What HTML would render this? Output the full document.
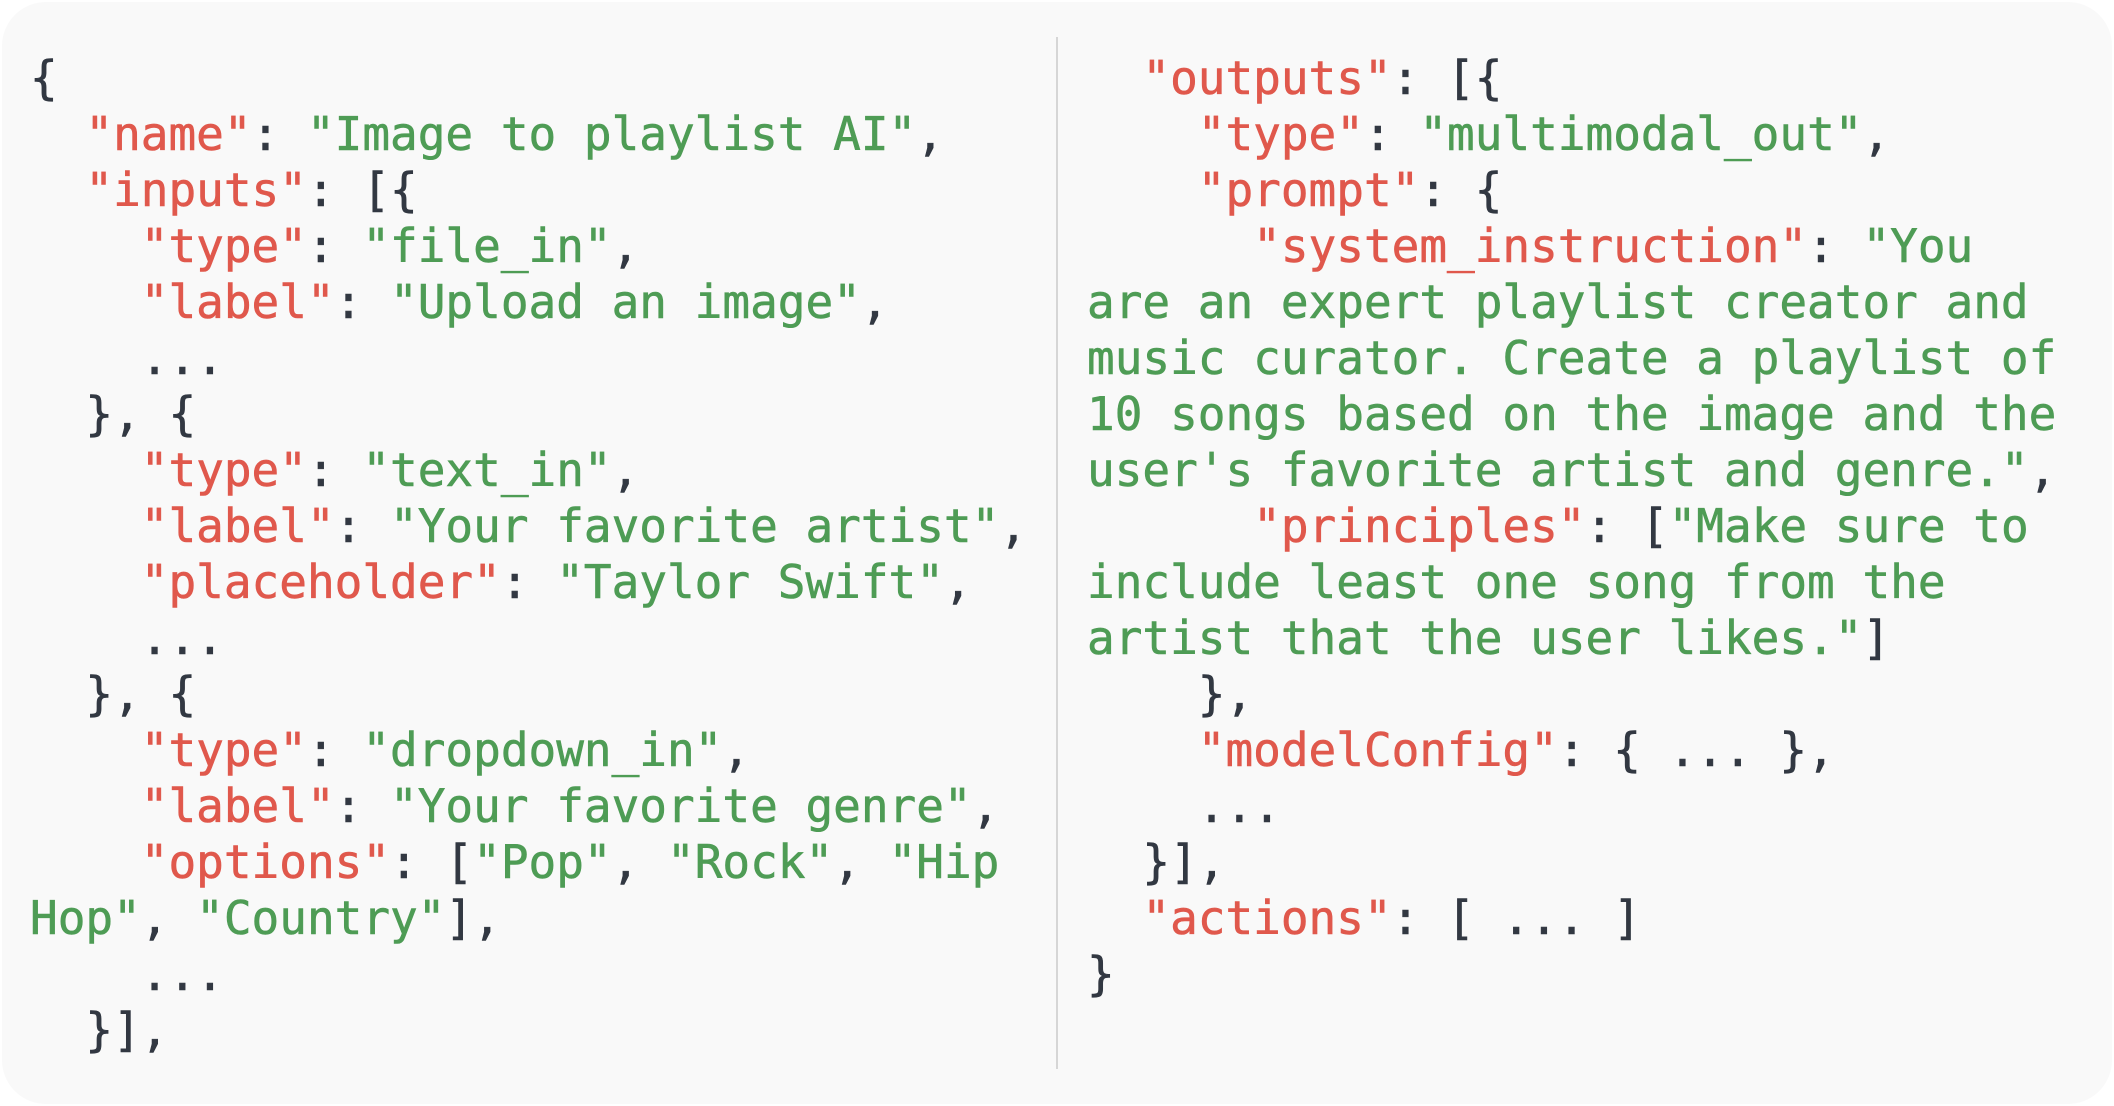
<!DOCTYPE html>
<html><head><style>
html,body{margin:0;padding:0;background:#fff;width:2114px;height:1106px;overflow:hidden}
.card{position:absolute;left:2px;top:2px;width:2110px;height:1102px;background:#f9f9f9;border-radius:44px}
.div{position:absolute;left:1056px;top:37px;width:2px;height:1032px;background:#d6d6d6}
pre{position:absolute;margin:0;font-family:"DejaVu Sans Mono","Liberation Mono",monospace;font-size:46px;line-height:56px;color:#323842;white-space:pre;-webkit-text-stroke:0.6px currentColor}
.k{color:#e0584c}.s{color:#4e9c55}
</style></head><body>
<div class="card"></div><div class="div"></div>
<pre style="left:30px;top:50px">{
  <span class="k">"name"</span>: <span class="s">"Image to playlist AI"</span>,
  <span class="k">"inputs"</span>: [{
    <span class="k">"type"</span>: <span class="s">"file_in"</span>,
    <span class="k">"label"</span>: <span class="s">"Upload an image"</span>,
    ...
  }, {
    <span class="k">"type"</span>: <span class="s">"text_in"</span>,
    <span class="k">"label"</span>: <span class="s">"Your favorite artist"</span>,
    <span class="k">"placeholder"</span>: <span class="s">"Taylor Swift"</span>,
    ...
  }, {
    <span class="k">"type"</span>: <span class="s">"dropdown_in"</span>,
    <span class="k">"label"</span>: <span class="s">"Your favorite genre"</span>,
    <span class="k">"options"</span>: [<span class="s">"Pop"</span>, <span class="s">"Rock"</span>, <span class="s">"Hip</span>
<span class="s">Hop"</span>, <span class="s">"Country"</span>],
    ...
  }],</pre>
<pre style="left:1087px;top:50px">  <span class="k">"outputs"</span>: [{
    <span class="k">"type"</span>: <span class="s">"multimodal_out"</span>,
    <span class="k">"prompt"</span>: {
      <span class="k">"system_instruction"</span>: <span class="s">"You</span>
<span class="s">are an expert playlist creator and</span>
<span class="s">music curator. Create a playlist of</span>
<span class="s">10 songs based on the image and the</span>
<span class="s">user's favorite artist and genre."</span>,
      <span class="k">"principles"</span>: [<span class="s">"Make sure to</span>
<span class="s">include least one song from the</span>
<span class="s">artist that the user likes."</span>]
    },
    <span class="k">"modelConfig"</span>: { ... },
    ...
  }],
  <span class="k">"actions"</span>: [ ... ]
}</pre>
</body></html>
